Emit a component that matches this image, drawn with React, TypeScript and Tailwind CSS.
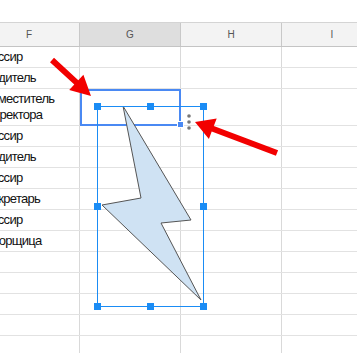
import React from "react";

type Row = { h: number; lines: string[] };

const rows: Row[] = [
  { h: 21, lines: ["кассир"] },
  { h: 21, lines: ["водитель"] },
  { h: 37, lines: ["заместитель", "директора"] },
  { h: 21, lines: ["кассир"] },
  { h: 21, lines: ["водитель"] },
  { h: 21, lines: ["кассир"] },
  { h: 21, lines: ["секретарь"] },
  { h: 21, lines: ["кассир"] },
  { h: 21, lines: ["уборщица"] },
  { h: 21, lines: [] },
  { h: 21, lines: [] },
  { h: 21, lines: [] },
  { h: 21, lines: [] },
  { h: 21, lines: [] },
];

const cols = ["F", "G", "H", "I"];

const handles: [number, number][] = [
  [97, 106],
  [150, 106],
  [203, 106],
  [97, 206],
  [203, 206],
  [97, 306],
  [150, 306],
  [203, 306],
];

function arrow(tx: number, ty: number, fx: number, fy: number, headLen: number, headHalf: number, shaftHalf: number) {
  const dx = tx - fx;
  const dy = ty - fy;
  const len = Math.hypot(dx, dy);
  const ux = dx / len;
  const uy = dy / len;
  const nx = -uy;
  const ny = ux;
  const bx = tx - ux * headLen;
  const by = ty - uy * headLen;
  const pts = [
    [fx + nx * shaftHalf, fy + ny * shaftHalf],
    [bx + nx * shaftHalf, by + ny * shaftHalf],
    [bx + nx * headHalf, by + ny * headHalf],
    [tx, ty],
    [bx - nx * headHalf, by - ny * headHalf],
    [bx - nx * shaftHalf, by - ny * shaftHalf],
    [fx - nx * shaftHalf, fy - ny * shaftHalf],
  ];
  return pts.map((p) => `${p[0].toFixed(1)},${p[1].toFixed(1)}`).join(" ");
}

export default function App() {
  return (
    <div
      className="relative w-[357px] h-[353px] overflow-hidden bg-white"
      style={{ fontFamily: '"Liberation Sans", Arial, sans-serif' }}
    >
      <div className="h-[22px]" />
      <div className="ml-[-21px] flex h-[25px] border-t border-b border-t-[#d4d4d4] border-b-[#c4c4c4]">
        {cols.map((c) => (
          <div
            key={c}
            className={`w-[101px] shrink-0 border-r border-r-[#c8c8c8] flex items-center justify-center text-[10px] text-[#555] ${
              c === "G" ? "bg-[#dedede]" : "bg-[#f3f3f3]"
            }`}
          >
            {c}
          </div>
        ))}
      </div>
      {rows.map((r, i) => (
        <div
          key={i}
          className="ml-[-21px] flex border-b border-b-[#e2e2e2]"
          style={{ height: r.h }}
        >
          {cols.map((c) => (
            <div
              key={c}
              className="w-[101px] shrink-0 border-r border-r-[#d9d9d9] flex flex-col justify-end pb-[2px] pl-[7px] text-[13px] tracking-[-0.7px] leading-[16px] text-[#111] whitespace-nowrap"
            >
              {c === "F" && r.lines.map((l) => <div key={l}>{l}</div>)}
            </div>
          ))}
        </div>
      ))}

      {/* selected cell */}
      <div className="absolute left-[80px] top-[89px] w-[101px] h-[37px] border-2 border-[#4a89f3]" />
      <div className="absolute left-[177px] top-[121px] w-[7px] h-[7px] bg-[#4a89f3] border border-white" />

      <svg className="absolute left-0 top-0 pointer-events-none" width={357} height={353} viewBox="0 0 357 353">
        <polygon
          points="123,106 191,220 161,223 201,300 102,205 141,198"
          fill="#cfe2f3"
          stroke="#555"
          strokeWidth={1}
          strokeLinejoin="miter"
        />
        <rect x={97.5} y={106.5} width={106} height={200} fill="none" stroke="#1a8cf5" strokeWidth={1} />
        {handles.map(([x, y], i) => (
          <rect key={i} x={x - 3} y={y - 3} width={7} height={7} fill="#1a8cf5" />
        ))}
        <circle cx={189} cy={116} r={1.8} fill="#777" />
        <circle cx={189} cy={122} r={1.8} fill="#777" />
        <circle cx={189} cy={128} r={1.8} fill="#777" />
        <polygon points={arrow(91, 96, 52, 60, 20, 10.5, 3)} fill="#f20000" />
        <polygon points={arrow(195, 122, 277, 153, 19, 11, 3)} fill="#f20000" />
      </svg>
    </div>
  );
}
